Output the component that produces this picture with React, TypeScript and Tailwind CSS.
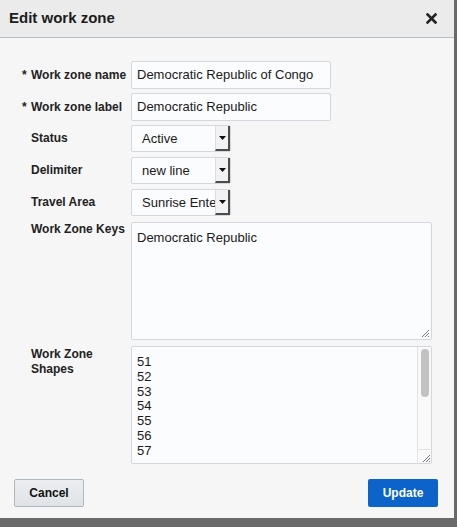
import React from 'react';

const font = { fontFamily: '"Liberation Sans", Arial, sans-serif' };

const SelectBox: React.FC<{ value: string }> = ({ value }) => (
  <div className="flex h-[27px] w-[100px] items-stretch rounded-[2px] border border-[#d3d8dd] bg-[#fbfcfd]">
    <div className="flex flex-1 items-center overflow-hidden whitespace-nowrap pl-[10px] text-[13px] text-[#1a1a1a]">
      {value}
    </div>
    <div className="flex w-[15px] items-center justify-center border-b-2 border-r-2 border-l border-b-[#4d4d4d] border-r-[#4d4d4d] border-l-[#d9dde1] bg-[#f2f2f2]">
      <svg width="7" height="4" viewBox="0 0 7 4">
        <path d="M0 0 L7 0 L3.5 4 Z" fill="#111" />
      </svg>
    </div>
  </div>
);

const Label: React.FC<{ text: string; required?: boolean; top?: boolean }> = ({ text, required, top }) => (
  <div className={`flex w-[109px] text-[12px] font-bold leading-[15px] text-[#222] ${top ? 'items-start' : 'items-center'}`}>
    <span className="w-[9px] shrink-0">{required ? '*' : ''}</span>
    <span>{text}</span>
  </div>
);

const App: React.FC = () => {
  const shapes = ['51', '52', '53', '54', '55', '56', '57'];

  return (
    <div className="h-[527px] w-[457px] overflow-hidden bg-[#6a6a6a]" style={font}>
      <div className="flex h-[518px] w-[454px] flex-col bg-[#f6f6f6]">
        {/* header */}
        <div className="flex h-[38px] shrink-0 items-center justify-between border-b border-[#b6bec7] bg-[#ebebeb] pl-[9px] pr-[16px]">
          <h1 className="text-[15px] font-bold text-[#1c1c1c]">Edit work zone</h1>
          <button className="flex h-[14px] w-[14px] items-center justify-center">
            <svg width="11" height="11" viewBox="0 0 11 11">
              <path d="M1.5 1.5 L9.5 9.5 M9.5 1.5 L1.5 9.5" stroke="#222" strokeWidth="2.6" strokeLinecap="square" />
            </svg>
          </button>
        </div>

        {/* body */}
        <div className="flex flex-1 flex-col pl-[22px] pt-[23px]">
          <div className="flex h-[28px]">
            <Label text="Work zone name" required />
            <div className="flex w-[200px] items-center rounded-[2px] border border-[#d3d8dd] bg-[#fbfcfd] pl-[5px] text-[13px] text-[#1a1a1a]">
              Democratic Republic of Congo
            </div>
          </div>
          <div className="mt-[4px] flex h-[28px]">
            <Label text="Work zone label" required />
            <div className="flex w-[200px] items-center rounded-[2px] border border-[#d3d8dd] bg-[#fbfcfd] pl-[5px] text-[13px] text-[#1a1a1a]">
              Democratic Republic
            </div>
          </div>
          <div className="mt-[4px] flex">
            <Label text="Status" />
            <SelectBox value="Active" />
          </div>
          <div className="mt-[5px] flex">
            <Label text="Delimiter" />
            <SelectBox value="new line" />
          </div>
          <div className="mt-[5px] flex">
            <Label text="Travel Area" />
            <SelectBox value="Sunrise Enterprise" />
          </div>
          <div className="mt-[6px] flex">
            <Label text="Work Zone Keys" top />
            <div className="relative h-[118px] w-[301px] rounded-[2px] border border-[#d3d8dd] bg-[#fbfcfd] px-[5px] pt-[7px] text-[13px] leading-[15px] text-[#1a1a1a]">
              Democratic Republic
              <svg className="absolute bottom-[1px] right-[1px]" width="10" height="10" viewBox="0 0 10 10">
                <path d="M9 2 L2 9 M9 5 L5 9 M9 8 L8 9" stroke="#777" strokeWidth="1" />
              </svg>
            </div>
          </div>
          <div className="mt-[6px] flex">
            <div className="w-[109px] pl-[9px] pt-[1px] text-[12px] font-bold leading-[15px] text-[#222]">
              Work Zone
              <br />
              Shapes
            </div>
            <div className="relative flex h-[118px] w-[301px] overflow-hidden rounded-[2px] border border-[#d3d8dd] bg-[#fbfcfd]">
              <div className="flex-1 overflow-hidden px-[5px] pt-[8px] text-[13px] leading-[14.8px] text-[#1a1a1a]">
                {shapes.map((s) => (
                  <div key={s}>{s}</div>
                ))}
              </div>
              <div className="flex w-[14px] flex-col border-l border-[#e3e3e3] bg-[#f9f9f9]">
                <div className="mx-auto mt-[2px] h-[48px] w-[8px] rounded-full bg-[#c2c2c2]" />
                <div className="flex-1" />
                <div className="flex h-[14px] items-end justify-end border-t border-[#e3e3e3]">
                  <svg width="10" height="10" viewBox="0 0 10 10">
                    <path d="M9 2 L2 9 M9 5 L5 9 M9 8 L8 9" stroke="#777" strokeWidth="1" />
                  </svg>
                </div>
              </div>
            </div>
          </div>
        </div>

        {/* footer */}
        <div className="flex shrink-0 items-center justify-between px-[14px] pb-[11px] pr-[16px]">
          <button className="h-[28px] w-[70px] rounded-[2px] border border-[#aeb7c0] bg-gradient-to-b from-[#eceef0] to-[#dfe3e7] text-[12px] font-bold text-[#111]">
            Cancel
          </button>
          <button className="h-[28px] w-[70px] rounded-[2px] bg-[#0c63ca] text-[12px] font-bold text-white">
            Update
          </button>
        </div>
      </div>
    </div>
  );
};

export default App;
